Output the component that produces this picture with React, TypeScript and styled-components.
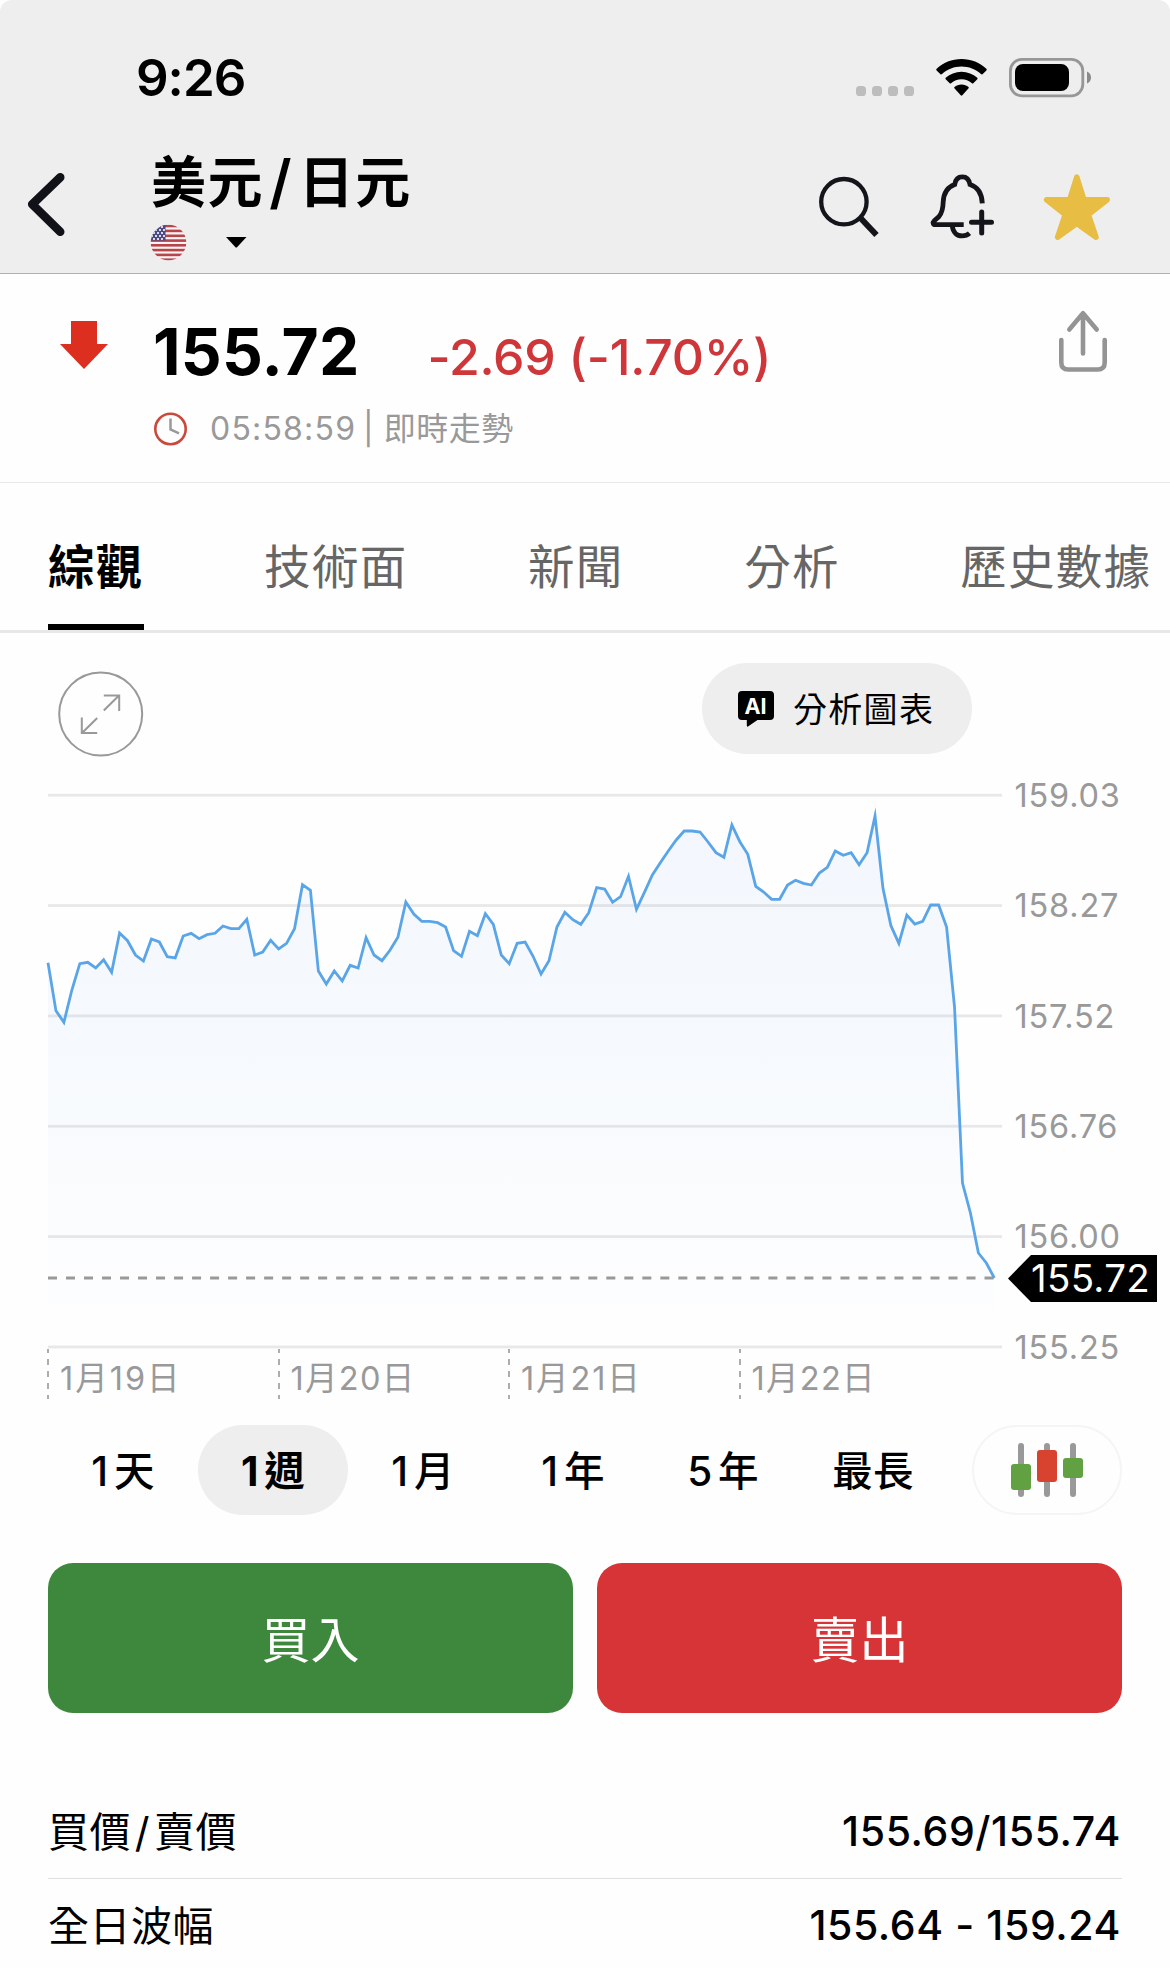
import React from "react";
import styled, { createGlobalStyle, css } from "styled-components";

const GlobalStyle = createGlobalStyle`
  * { box-sizing: border-box; }
  body {
    margin: 0;
    background: #fefefe;
    color: #000;
    font-family: Inter, "Noto Sans CJK TC", "Liberation Sans", sans-serif;
    -webkit-font-smoothing: antialiased;
  }
  button {
    border: 0;
    padding: 0;
    margin: 0;
    background: none;
    font: inherit;
    color: inherit;
  }
  svg { display: block; flex: none; }
`;

const Screen = styled.div`
  width: 1170px;
  height: 1968px;
  overflow: hidden;
  display: flex;
  flex-direction: column;
`;

const Header = styled.header`
  height: 274px;
  flex: none;
  display: flex;
  flex-direction: column;
  background: #eeeeee;
  border-bottom: 1px solid #b0b0b0;
  border-radius: 12px 12px 0 0;
`;

const StatusBar = styled.div`
  height: 140px;
  padding: 16px 79px 0 136px;
  display: flex;
  align-items: center;
  justify-content: space-between;
`;

const Clock = styled.span`
  font-size: 51px;
  font-weight: 600;
  line-height: 60px;
  letter-spacing: -1px;
`;

const StatusIcons = styled.div`
  display: flex;
  align-items: center;
`;

const NavBar = styled.div`
  flex: 1;
  display: flex;
  padding: 0 58px 0 26px;
`;

const BackButton = styled.button`
  margin-top: 32px;
  width: 42px;
  height: 64px;
`;

const TitleBlock = styled.div`
  margin-left: 83px;
  margin-top: 8px;
  flex: 1;
  display: flex;
  flex-direction: column;
`;

const Title = styled.h1`
  margin: 0;
  display: flex;
  font-size: 55px;
  line-height: 68px;
  font-weight: 600;
  letter-spacing: 1.4px;
`;

const Slash = styled.span`
  width: 35px;
  padding-right: 2px;
  font-size: 59px;
  font-weight: 600;
  text-align: center;
  letter-spacing: 0;
`;

const Subtitle = styled.div`
  margin-top: 8px;
  margin-left: -1.5px;
  display: flex;
  align-items: center;
  gap: 39.5px;
`;

const NavActions = styled.div`
  display: flex;
  margin-top: 32px;
`;

const Quote = styled.section`
  height: 209px;
  flex: none;
  display: flex;
  padding: 0 62px 0 60px;
  border-bottom: 1px solid #e8e8e8;
`;

const TrendIcon = styled.div`
  padding-top: 47px;
  width: 93px;
`;

const QuoteBody = styled.div`
  flex: 1;
`;

const PriceLine = styled.div`
  display: flex;
  align-items: baseline;
  padding-top: 39px;
`;

const Price = styled.span`
  width: 274.5px;
  font-size: 64px;
  line-height: 78px;
  font-weight: 700;
  letter-spacing: 0.2px;
`;

const Change = styled.span`
  font-size: 50px;
  line-height: 78px;
  font-weight: 500;
  letter-spacing: -0.25px;
  color: #cf363a;
`;

const TimeLine = styled.div`
  margin-top: 12.5px;
  display: flex;
  align-items: center;
  height: 40px;
  font-size: 32px;
  line-height: 40px;
  color: #999;
`;

const TimeText = styled.span`
  width: 153px;
  margin-left: 22px;
  letter-spacing: 1.2px;
`;

const TrendLabel = styled.span`
  letter-spacing: 0.5px;
`;

const ShareButton = styled.button`
  margin-top: 36px;
  align-self: flex-start;
`;

const Tabs = styled.nav`
  height: 150px;
  flex: none;
  display: flex;
  gap: 120.5px;
  padding-left: 48px;
  border-bottom: 3px solid #e8e8e8;
`;

const Tab = styled.button<{ $active?: boolean }>`
  height: 147px;
  flex: none;
  padding-top: 38px;
  padding-bottom: 11px;
  font-size: 46.5px;
  line-height: 60px;
  letter-spacing: 1.3px;
  color: #666;
  font-weight: 400;
  border-bottom: 6px solid transparent;
  ${(p) =>
    p.$active &&
    css`
      color: #000;
      font-weight: 700;
      border-bottom-color: #000;
    `}
`;

const ChartTools = styled.div`
  height: 140px;
  flex: none;
  display: flex;
  justify-content: space-between;
  padding: 30px 198px 0 58px;
`;

const ExpandButton = styled.button`
  width: 86px;
  height: 86px;
  margin-top: 8px;
`;

const AnalyzeButton = styled.button`
  width: 270px;
  height: 91px;
  border-radius: 46px;
  background: #eeeeee;
  display: flex;
  align-items: center;
  padding-left: 36px;
  padding-bottom: 2px;
  gap: 19px;
  font-size: 34px;
  font-weight: 400;
  letter-spacing: 1.3px;
`;

const AiBadge = styled.span`
  position: relative;
  top: 1px;
  width: 36px;
  height: 36px;
`;

const AiText = styled.span`
  position: absolute;
  inset: 0 1px 5px 0;
  display: flex;
  align-items: center;
  justify-content: center;
  color: #fff;
  font-size: 21.5px;
  font-weight: 700;
  letter-spacing: 0;
`;

const ChartArea = styled.section`
  position: relative;
  height: 576px;
  flex: none;
  display: flex;
  padding-left: 48px;
`;

const AxisLabels = styled.div`
  display: flex;
  flex-direction: column;
  padding-left: 12.5px;
`;

const AxisLabel = styled.span`
  height: 110.35px;
  flex: none;
  line-height: 45.4px;
  font-size: 32.5px;
  letter-spacing: 0.8px;
  color: #999;
  &:last-child { height: 46px; }
`;

const PriceTag = styled.div`
  position: absolute;
  left: 1008px;
  top: 482px;
  width: 149px;
  height: 47px;
  padding-left: 23px;
  background: #000;
  color: #fff;
  font-size: 38.5px;
  line-height: 47px;
  letter-spacing: 0.3px;
  clip-path: polygon(0 50%, 23px 0, 100% 0, 100% 100%, 23px 100%);
`;

const DateAxis = styled.div`
  height: 76px;
  flex: none;
  display: grid;
  grid-template-columns: repeat(4, 230.5px);
  padding-left: 47px;
`;

const DateCell = styled.div`
  display: flex;
  gap: 11px;
`;

const DateText = styled.span<{ $spacing: number }>`
  margin-top: 10px;
  font-size: 32.5px;
  line-height: 40px;
  color: #999;
  letter-spacing: ${(p) => p.$spacing}px;
`;

const Periods = styled.div`
  height: 90px;
  flex: none;
  display: flex;
  padding-left: 48px;
`;

const Period = styled.button<{ $active?: boolean }>`
  width: 150px;
  height: 90px;
  border-radius: 45px;
  font-size: 40.5px;
  line-height: 90px;
  padding-top: 2px;
  text-align: center;
  letter-spacing: 0.3px;
  font-weight: ${(p) => (p.$active ? 700 : 500)};
  background: ${(p) => (p.$active ? "#eeeeee" : "transparent")};
`;

const PeriodCount = styled.span`
  margin-right: 5.5px;
`;

const CandleButton = styled.button`
  width: 150px;
  height: 90px;
  margin-left: 24px;
  border: 2px solid #f5f5f5;
  border-radius: 45px;
  display: flex;
  align-items: center;
  justify-content: center;
`;

const Actions = styled.div`
  margin-top: 48px;
  flex: none;
  display: grid;
  grid-template-columns: 525px 525px;
  gap: 24px;
  padding-left: 48px;
`;

const ActionButton = styled.button<{ $color: string }>`
  height: 150px;
  border-radius: 25px;
  background: ${(p) => p.$color};
  color: #fff;
  font-size: 49px;
  font-weight: 400;
  line-height: 144px;
  padding-top: 6px;
`;

const Details = styled.dl`
  margin: 72px 48px 0;
`;

const DetailRow = styled.div`
  height: 94px;
  display: flex;
  align-items: center;
  justify-content: space-between;
  font-size: 41px;
  line-height: 93px;
  border-bottom: 1px solid #e0e0e0;
`;

const DetailLabel = styled.dt`
  display: flex;
  padding-top: 2px;
  font-weight: 400;
  letter-spacing: 0.5px;
`;

const LabelSlash = styled.span`
  width: 23px;
  text-align: center;
`;

const DetailValue = styled.dd`
  margin: 0;
  padding-right: 1px;
  font-weight: 500;
  letter-spacing: 0.6px;
`;

const TABS = ["綜觀", "技術面", "新聞", "分析", "歷史數據"];
const AXIS = ["159.03", "158.27", "157.52", "156.76", "156.00", "155.25"];
const DATES = [
  { text: "1月19日", spacing: 2 },
  { text: "1月20日", spacing: 1.3 },
  { text: "1月21日", spacing: 1.9 },
  { text: "1月22日", spacing: 1.3 },
];
const PERIODS = [
  { count: "1", unit: "天" },
  { count: "1", unit: "週" },
  { count: "1", unit: "月" },
  { count: "1", unit: "年" },
  { count: "5", unit: "年" },
  { count: "", unit: "最長" },
];

/* Hourly samples, as heights in the plot (0 = top of the plot). */
const SERIES = [
  189.7, 237.7, 249.3, 217, 190.7, 189.3, 195, 186.7, 199.3, 160, 167.7, 182, 188, 166,
  169, 183.7, 185, 163, 160.3, 165.7, 161.7, 160.3, 153, 155.7, 155.7, 146.3, 182, 179,
  167.3, 176, 170.3, 155.7, 111.7, 117.3, 198, 211, 198, 208, 192.3, 195, 164.7, 182,
  187.7, 177.3, 164.3, 129, 141, 148.3, 148.3, 149.7, 154, 177.7, 183.3, 158.3, 162.7,
  140.7, 151.3, 182, 190.7, 170.3, 169, 183.3, 201, 187.7, 154, 139.3, 146.7, 151.3,
  139.7, 114.7, 116, 129.3, 123.7, 103.3, 136.3, 119.3, 102, 89.7, 78, 67, 58, 58, 59,
  69, 79.7, 84.3, 52, 68.7, 81.3, 113.3, 119, 126.3, 126.3, 112, 107.3, 110.3, 112,
  100, 94.3, 78, 82.3, 79.7, 91.7, 79.7, 43, 115.3, 152.7, 170.3, 142, 151, 148.3,
  132, 132, 154, 234, 410, 440, 480, 490, 505,
];

const GRID_TOP = 22;
const GRID_STEP = 110.35;
const PLOT_WIDTH = 946.3;

function Chart() {
  const step = PLOT_WIDTH / (SERIES.length - 1);
  const points = SERIES.map((y, i) => `${(i * step).toFixed(2)},${y}`).join(" L");
  const bottom = GRID_TOP + GRID_STEP * 5;
  return (
    <svg width="954" height="580" viewBox="0 0 954 580" overflow="visible">
      <defs>
        <linearGradient id="fill" gradientUnits="userSpaceOnUse" x1="0" y1="40" x2="0" y2={bottom}>
          <stop offset="0" stopColor="#4a90f0" stopOpacity="0.06" />
          <stop offset="0.45" stopColor="#4a90f0" stopOpacity="0.044" />
          <stop offset="1" stopColor="#4a90f0" stopOpacity="0" />
        </linearGradient>
      </defs>
      {AXIS.map((label, i) => (
        <rect key={label} x="0" y={GRID_TOP + i * GRID_STEP - 1.2} width="954" height="2.8" fill="#e8e8e8" />
      ))}
      <path d={`M${points} L${PLOT_WIDTH},${bottom} L0,${bottom} Z`} fill="url(#fill)" />
      <line x1="0" x2={PLOT_WIDTH} y1="505" y2="505" stroke="#999" strokeWidth="3" strokeDasharray="9 9.01" />
      <path d={`M${points}`} fill="none" stroke="#5aa5e8" strokeWidth="2.8" strokeMiterlimit="10" />
    </svg>
  );
}

function Flag() {
  return (
    <svg width="37" height="37" viewBox="0 0 37 37">
      <defs>
        <clipPath id="disc"><circle cx="18.5" cy="18.5" r="17.8" /></clipPath>
      </defs>
      <g clipPath="url(#disc)">
        <rect width="37" height="37" fill="#fbf3f3" />
        {[0.7, 5.6, 10.5, 15.3, 20, 24.8, 29.6, 34.4].map((y) => (
          <rect key={y} y={y} width="37" height="2.6" fill="#b5474c" />
        ))}
        <rect width="15.5" height="16.5" fill="#4b4a86" />
        {[3, 6, 9, 12, 15].map((y, r) =>
          [2, 6, 10, 14].map((x) => (
            <circle key={`${x}-${y}`} cx={x + (r % 2 ? 0 : -2)} cy={y} r="1.05" fill="#fff" />
          ))
        )}
      </g>
    </svg>
  );
}

export default function App() {
  return (
    <>
      <GlobalStyle />
      <Screen>
        <Header>
          <StatusBar>
            <Clock>9:26</Clock>
            <StatusIcons>
              <svg width="236" height="42" viewBox="855 57 236 42">
                {[856, 872, 888, 904].map((x) => (
                  <rect key={x} x={x} y="86" width="10" height="10" rx="3.6" fill="#bdbdbd" />
                ))}
                <path d="M961.5 59 C971 59 980 62.5 986.6 69 Q987 69.7 986.4 70.4 L982.5 74.2 Q981.8 74.7 981 74.1 C975.5 69.2 968.8 66.5 961.5 66.5 C954.2 66.5 947.5 69.2 942 74.1 Q941.2 74.7 940.5 74.2 L936.6 70.4 Q936 69.7 936.4 69 C943 62.5 952 59 961.5 59 Z" />
                <path d="M961.5 71.7 C967.5 71.7 973 74 977.3 77.8 Q977.9 78.5 977.3 79.2 L973.3 83.2 Q972.6 83.7 971.9 83.2 C969 80.7 965.4 79.3 961.5 79.3 C957.6 79.3 954 80.7 951.1 83.2 Q950.4 83.7 949.7 83.2 L945.7 79.2 Q945.1 78.5 945.7 77.8 C950 74 955.5 71.7 961.5 71.7 Z" />
                <path d="M961.5 84.4 C964.3 84.4 966.7 85.3 968.5 86.9 Q969.2 87.6 968.6 88.3 L962.3 95.3 Q961.5 96.2 960.7 95.3 L954.4 88.3 Q953.8 87.6 954.5 86.9 C956.3 85.3 958.7 84.4 961.5 84.4 Z" />
                <rect x="1010.4" y="59.4" width="72.4" height="36.4" rx="11.5" fill="none" stroke="#979797" strokeWidth="2.8" />
                <rect x="1015" y="64" width="54" height="27" rx="8" />
                <path d="M1087 71.5 C1089.5 72.5 1091 74.5 1091 77.5 C1091 80.5 1089.5 82.5 1087 83.5 Z" fill="#8a8a8a" />
              </svg>
            </StatusIcons>
          </StatusBar>
          <NavBar>
            <BackButton aria-label="返回">
              <svg width="42" height="64" viewBox="26 172 42 64">
                <path d="M60.2 177.3 L32.2 204.3 L60.2 231.8" fill="none" stroke="#111218" strokeWidth="8.6" strokeLinecap="round" strokeLinejoin="round" />
              </svg>
            </BackButton>
            <TitleBlock>
              <Title>
                美元<Slash>/</Slash>日元
              </Title>
              <Subtitle>
                <Flag />
                <svg width="21" height="11" viewBox="0 0 21 11">
                  <path d="M0 0 H20.5 L10.8 10.5 H9.7 Z" />
                </svg>
              </Subtitle>
            </TitleBlock>
            <NavActions>
              <svg width="296" height="72" viewBox="816 172 296 72">
                <g fill="none" stroke="#14151b" strokeWidth="5">
                  <circle cx="843.9" cy="201.7" r="22.7" strokeWidth="4.3" />
                  <path d="M860 217.5 L876.5 235" strokeWidth="6" />
                  <path d="M982.3 203.3 C982 196 979.5 187.5 970 184.5 Q968.8 176.8 962.3 176.8 Q955.8 176.8 954.7 184.5 C945.5 187.8 943.5 195 943.2 202 C943 210 941.5 213.5 939 216.5 L934.3 220.8 C932.3 222.8 933 224.7 935.5 224.7 H963.7" strokeWidth="4.8" />
                  <path d="M952.3 226 C953 232.5 957 235.9 962.3 235.9 Q966.5 235.9 969.5 233.3" strokeWidth="4.8" />
                  <path d="M971.5 222.3 H991.5 M981.7 212 V233" strokeLinecap="round" />
                </g>
                <path d="M1076.8 177 L1084 199.8 H1107.2 L1088.4 214.6 L1096 237.2 L1076.8 223.6 L1057.6 237.2 L1065.2 214.6 L1046.6 199.8 H1069.6 Z" fill="#e8bd43" stroke="#e8bd43" strokeWidth="5.5" strokeLinejoin="round" />
              </svg>
            </NavActions>
          </NavBar>
        </Header>

        <Quote>
          <TrendIcon>
            <svg width="48" height="48" viewBox="0 0 48 48">
              <path d="M11 0 H37 V23 H48 L24 48 L0 23 H11 Z" fill="#dc2f1f" />
            </svg>
          </TrendIcon>
          <QuoteBody>
            <PriceLine>
              <Price>155.72</Price>
              <Change>-2.69 (-1.70%)</Change>
            </PriceLine>
            <TimeLine>
              <svg width="35" height="34" viewBox="0 0 35 34">
                <circle cx="17.5" cy="17" r="15.2" fill="none" stroke="#c94a3c" strokeWidth="2.6" />
                <path d="M17.5 6.5 V17.5 L26 21.3" fill="none" stroke="#999" strokeWidth="2.5" />
              </svg>
              <TimeText>05:58:59</TimeText>
              <TrendLabel>| 即時走勢</TrendLabel>
            </TimeLine>
          </QuoteBody>
          <ShareButton aria-label="分享">
            <svg width="50" height="64" viewBox="1058 310 50 64" fill="none" stroke="#949494" strokeWidth="4.6" strokeLinecap="round" strokeLinejoin="round">
              <path d="M1083 353.5 V313.5 M1069.3 329.5 L1083 313.3 L1096.7 329.5" />
              <path d="M1061.3 340 V362.5 Q1061.3 369.5 1068.3 369.5 H1097.7 Q1104.7 369.5 1104.7 362.5 V340" />
            </svg>
          </ShareButton>
        </Quote>

        <Tabs>
          {TABS.map((t, i) => (
            <Tab key={t} $active={i === 0}>{t}</Tab>
          ))}
        </Tabs>

        <ChartTools>
          <ExpandButton aria-label="展開">
            <svg width="86" height="86" viewBox="0 0 86 86" fill="none" stroke="#999" strokeWidth="2">
              <circle cx="42.7" cy="43" r="41.5" />
              <path d="M45.8 39.5 L61 24.5 M45.8 24.5 H61.2 V40 M39.2 47 L24 62 M23.8 46.5 V62 H39.2" />
            </svg>
          </ExpandButton>
          <AnalyzeButton>
            <AiBadge>
              <svg width="36" height="36" viewBox="0 0 36 36">
                <path d="M4 0 H32 Q36 0 36 4 V25 Q36 29 32 29 H19.5 L10 35.5 Q8.8 36 8.8 34.5 V29 H4 Q0 29 0 25 V4 Q0 0 4 0 Z" />
              </svg>
              <AiText>AI</AiText>
            </AiBadge>
            分析圖表
          </AnalyzeButton>
        </ChartTools>

        <ChartArea>
          <Chart />
          <AxisLabels>
            {AXIS.map((l) => (
              <AxisLabel key={l}>{l}</AxisLabel>
            ))}
          </AxisLabels>
          <PriceTag>155.72</PriceTag>
        </ChartArea>

        <DateAxis>
          {DATES.map((d) => (
            <DateCell key={d.text}>
              <svg width="2" height="50" viewBox="0 0 2 50">
                <line x1="1" x2="1" y1="-2" y2="50" stroke="#999" strokeWidth="1.6" strokeDasharray="6 6" />
              </svg>
              <DateText $spacing={d.spacing}>{d.text}</DateText>
            </DateCell>
          ))}
        </DateAxis>

        <Periods>
          {PERIODS.map((p, i) => (
            <Period key={p.count + p.unit} $active={i === 1}>
              {p.count && <PeriodCount>{p.count}</PeriodCount>}
              {p.unit}
            </Period>
          ))}
          <CandleButton aria-label="K線">
            <svg width="72" height="54" viewBox="1011 1443 72 54">
              <g fill="#999">
                <rect x="1018" y="1443" width="6" height="54" rx="3" />
                <rect x="1044" y="1443" width="6" height="54" rx="3" />
                <rect x="1070" y="1443" width="6" height="54" rx="3" />
              </g>
              <rect x="1011" y="1464" width="20" height="26" rx="3" fill="#62a142" />
              <rect x="1037" y="1450" width="20" height="32" rx="3" fill="#d84330" />
              <rect x="1063" y="1458" width="20" height="20" rx="3" fill="#62a142" />
            </svg>
          </CandleButton>
        </Periods>

        <Actions>
          <ActionButton $color="#3e883e">買入</ActionButton>
          <ActionButton $color="#d63436">賣出</ActionButton>
        </Actions>

        <Details>
          <DetailRow>
            <DetailLabel>買價<LabelSlash>/</LabelSlash>賣價</DetailLabel>
            <DetailValue>155.69/155.74</DetailValue>
          </DetailRow>
          <DetailRow>
            <DetailLabel>全日波幅</DetailLabel>
            <DetailValue>155.64 - 159.24</DetailValue>
          </DetailRow>
        </Details>
      </Screen>
    </>
  );
}
